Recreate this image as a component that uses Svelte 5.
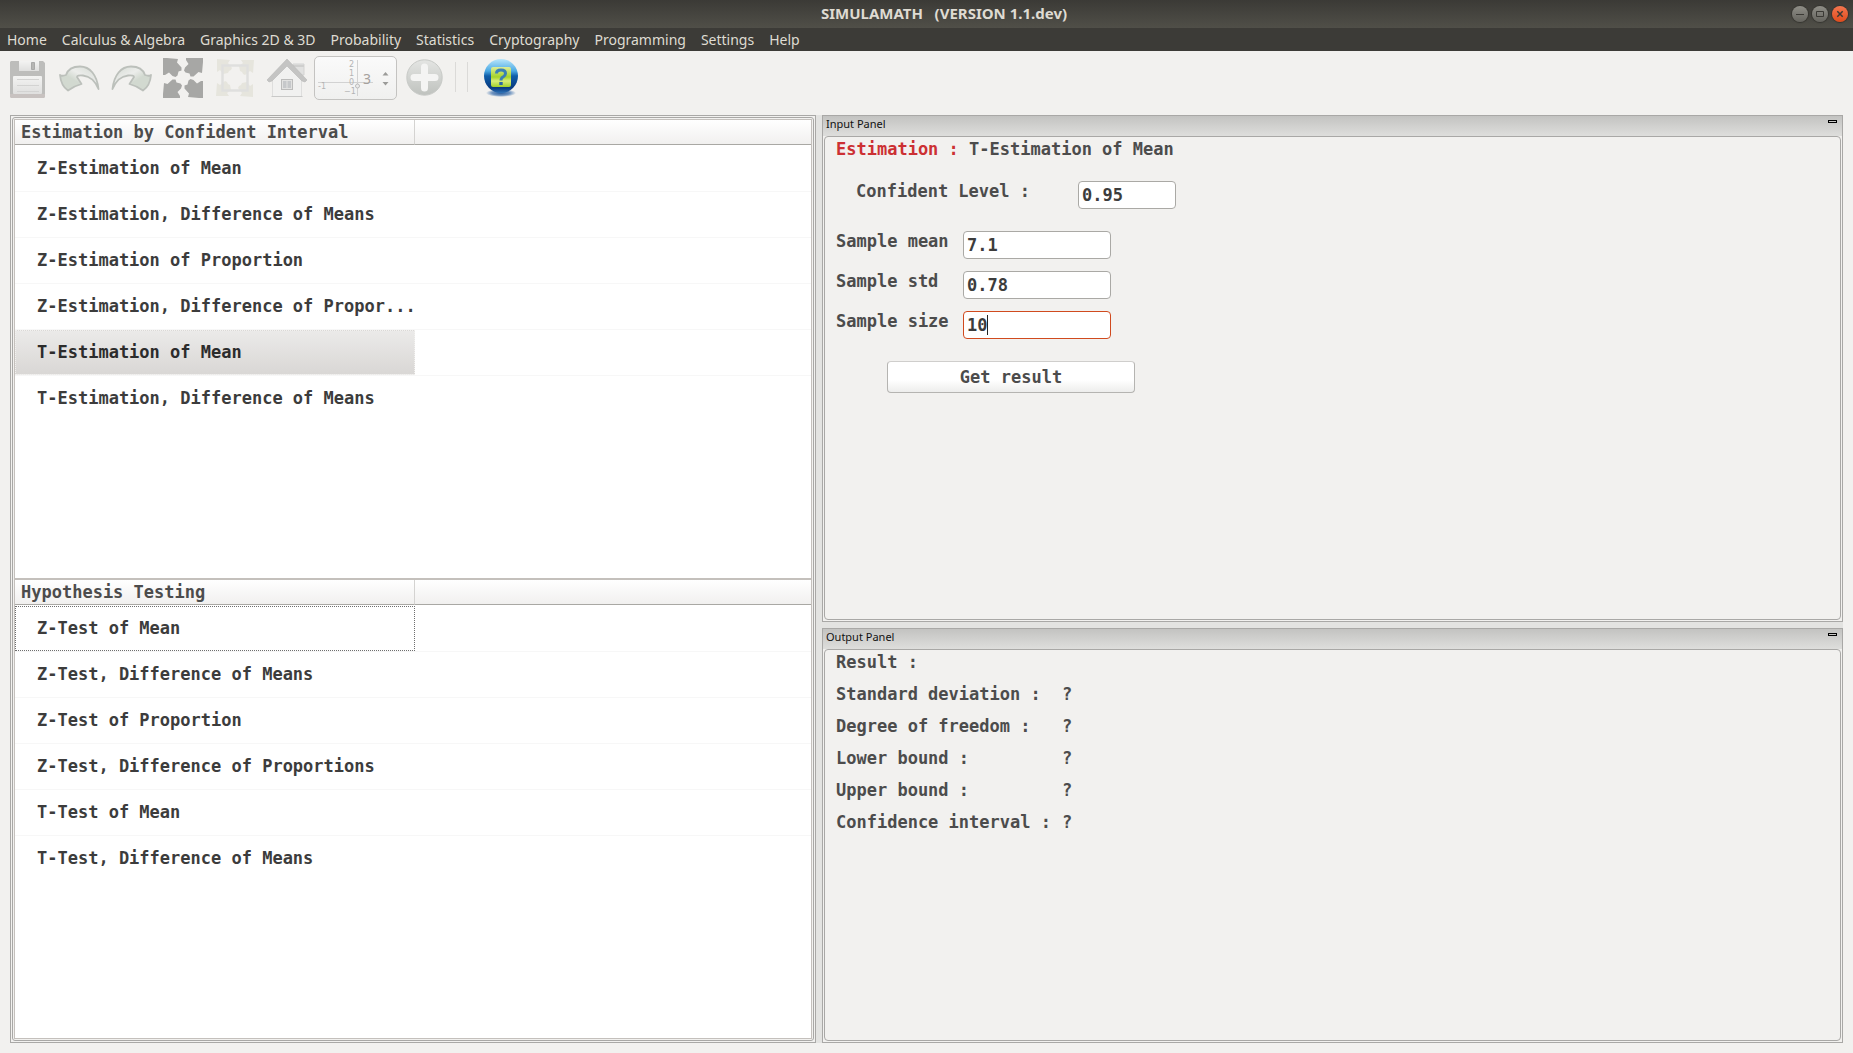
<script>
	const menus = [
		'Home',
		'Calculus & Algebra',
		'Graphics 2D & 3D',
		'Probability',
		'Statistics',
		'Cryptography',
		'Programming',
		'Settings',
		'Help'
	];

	const trees = [
		{
			title: 'Estimation by Confident Interval',
			rows: [
				'Z-Estimation of Mean',
				'Z-Estimation, Difference of Means',
				'Z-Estimation of Proportion',
				'Z-Estimation, Difference of Propor...',
				'T-Estimation of Mean',
				'T-Estimation, Difference of Means'
			]
		},
		{
			title: 'Hypothesis Testing',
			rows: [
				'Z-Test of Mean',
				'Z-Test, Difference of Means',
				'Z-Test of Proportion',
				'Z-Test, Difference of Proportions',
				'T-Test of Mean',
				'T-Test, Difference of Means'
			]
		}
	];

	let selected = $state('T-Estimation of Mean');
	let current = $state('Z-Test of Mean');

	let level = $state('0.95');
	let fields = $state([
		{ id: 'mean', label: 'Sample mean', value: '7.1' },
		{ id: 'std', label: 'Sample std', value: '0.78' },
		{ id: 'size', label: 'Sample size', value: '10' }
	]);
	let active = $state('size');

	const results = [
		'Standard deviation :',
		'Degree of freedom :',
		'Lower bound :',
		'Upper bound :',
		'Confidence interval :'
	];

	function pick(row) {
		selected = row;
		current = row;
	}
</script>

<div class="window">
	<header class="titlebar">
		<h1>SIMULAMATH &nbsp; (VERSION 1.1.dev)</h1>
		<div class="controls">
			<button aria-label="Minimize">
				<svg viewBox="0 0 16 16"><path d="M4 8.5h8" /></svg>
			</button>
			<button aria-label="Maximize">
				<svg viewBox="0 0 16 16"><path d="M4.5 5.5h7v5h-7z" /></svg>
			</button>
			<button class="close" aria-label="Close">
				<svg viewBox="0 0 16 16"><path d="M5.3 5.3l5.4 5.4M10.7 5.3l-5.4 5.4" /></svg>
			</button>
		</div>
	</header>

	<nav class="menubar">
		{#each menus as menu}
			<button>{menu}</button>
		{/each}
	</nav>

	<div class="toolbar">
		<div class="tools">
			<button aria-label="Save">
				<svg viewBox="0 0 40 40">
					<defs>
						<linearGradient id="paper" x1="0" y1="0" x2="0" y2="1">
							<stop offset="0" stop-color="#f3f3f2" />
							<stop offset="1" stop-color="#dfdfde" />
						</linearGradient>
					</defs>
					<path d="M4 3h32l2 2v33q0 2-2 2H5q-2 0-2-2V4z" fill="#bdbdbb" />
					<path d="M3 36h35v2q0 2-2 2H5q-2 0-2-2z" fill="#c8c2c0" />
					<path d="M12 3h20v10H12z" fill="url(#paper)" />
					<path d="M24.5 4.5h3v7h-3z" fill="#b6b6b4" stroke="#a9a9a8" />
					<rect x="6" y="18" width="29" height="18" rx="1" fill="url(#paper)" />
					<path d="M10 21.5h22M10 27.5h22M10 33.5h22" stroke="#d3d3d2" />
				</svg>
			</button>
			<button aria-label="Undo">
				<svg viewBox="0 0 40 40">
					<defs>
						<linearGradient id="arrow" x1="0" y1="1" x2="1" y2="0">
							<stop offset="0.4" stop-color="#d2d9d0" />
							<stop offset="0.6" stop-color="#ecedeb" />
							<stop offset="1" stop-color="#d2d8d0" />
						</linearGradient>
					</defs>
					<path
						d="M1 17Q3 18.5 7 17C9 11 14 8.5 21 8.5c10 0 17 8.5 18.5 22.5C36 23 32 18.5 24 17.5q-6-.5-6 1.500l4.500 7Q15 28 9 32.5 2 28 1 17z"
						fill="url(#arrow)"
						stroke="#bcc0bb"
						stroke-width="1.8"
						stroke-linejoin="round"
					/>
				</svg>
			</button>
			<button aria-label="Redo">
				<svg viewBox="0 0 40 40">
					<path
						transform="translate(41 0) scale(-1 1)"
						d="M1 17Q3 18.5 7 17C9 11 14 8.5 21 8.5c10 0 17 8.5 18.5 22.5C36 23 32 18.5 24 17.5q-6-.5-6 1.500l4.500 7Q15 28 9 32.5 2 28 1 17z"
						fill="url(#arrow)"
						stroke="#bcc0bb"
						stroke-width="1.8"
						stroke-linejoin="round"
					/>
				</svg>
			</button>
			<button aria-label="Expand">
				<svg viewBox="0 0 40 40" fill="#a7a7a5">
					{#each [0, 90, 180, 270] as angle}
						<path
							transform="rotate({angle} 20 20)"
							d="M0 0h4l11 1-1 3.5 4.5 5v3l-3 1-1 4-2 1.5-3-1L6 14.500 2 17H0z"
						/>
					{/each}
				</svg>
			</button>
			<button aria-label="Fit to window">
				<svg viewBox="0 0 40 40" fill="#e6e5dd">
					{#each [0, 90, 180, 270] as angle}
						<path
							transform="rotate({angle} 20 20)"
							d="M2 1l13 1-2 3 4 5-1 2-2 1-1 2-5 1-3-4-3 2z"
						/>
					{/each}
					<rect x="7.5" y="7.5" width="25" height="25" fill="none" stroke="#dfdfde" stroke-width="2.5" />
				</svg>
			</button>
			<button aria-label="Home view">
				<svg viewBox="0 0 40 40">
					<path d="M26 6h11v11h-3L26 12z" fill="#e1e1e0" stroke="#d3d3d2" />
					<path d="M26 7h11v2H26z" fill="#cfcfce" />
					<path d="M5.5 20L20 6.5 34.5 20v18.5h-29z" fill="#f1f1f0" stroke="#dededd" />
					<path d="M4.5 38.5h31" stroke="#c9c9c8" />
					<path d="M0 22L20 1l20 21-2 2-3-1L20 8 5 23l-3 1z" fill="#c4c4c3" stroke="#b8b8b7" stroke-width="0.6" />
					<rect x="14.5" y="21.5" width="11" height="10" fill="#e2e2e1" stroke="#bcbcbb" />
					<path d="M16 23h3.500v7H16zM20.500 23H24v7h-3.500z" fill="#c6c8ca" />
				</svg>
			</button>
		</div>

		<div class="spin">
			<svg viewBox="0 0 83 44" aria-hidden="true">
				<path d="M43.5 4v36M4 26.5h55" stroke="#d2d2d2" fill="none" />
				<g>
					<text x="35" y="11">2</text>
					<text x="35" y="20">1</text>
					<text x="35" y="29">0</text>
					<text x="30" y="38">−1</text>
					<text x="4" y="33">-1</text>
				</g>
				<circle cx="43.5" cy="30" r="2" fill="#ececec" stroke="#bbb" />
				<path d="M68.5 19.5l3-3.5 3 3.5zM68.5 26l3 3.5 3-3.5z" fill="#9b9b99" />
			</svg>
			<input type="text" value="3" aria-label="Decimals" />
		</div>

		<button class="add" aria-label="Add">
			<svg viewBox="0 0 40 40">
				<defs>
					<linearGradient id="disc" x1="0" y1="0" x2="0" y2="1">
						<stop offset="0" stop-color="#e4e5e3" />
						<stop offset="1" stop-color="#bfc2be" />
					</linearGradient>
				</defs>
				<circle cx="20.5" cy="19.5" r="17.7" fill="url(#disc)" stroke="#c8cac7" />
				<path d="M20.5 9v21M10 19.5h21" stroke="#f4f4f3" stroke-width="7" stroke-linecap="round" />
			</svg>
		</button>

		<div class="separators"></div>

		<button class="help" aria-label="Help contents">
			<svg viewBox="0 0 40 40">
				<defs>
					<linearGradient id="globe" x1="0" y1="0" x2="0" y2="1">
						<stop offset="0" stop-color="#b9e6fb" />
						<stop offset="0.35" stop-color="#4ba9e4" />
						<stop offset="0.5" stop-color="#105ea9" />
						<stop offset="0.85" stop-color="#083a80" />
						<stop offset="1" stop-color="#2f74b8" />
					</linearGradient>
					<linearGradient id="page" x1="0" y1="0" x2="0" y2="1">
						<stop offset="0" stop-color="#ddec9a" />
						<stop offset="0.5" stop-color="#a5d329" />
						<stop offset="0.7" stop-color="#d9ee7a" />
						<stop offset="1" stop-color="#a2d02a" />
					</linearGradient>
					<radialGradient id="shade">
						<stop offset="0" stop-color="#2d5f9e" />
						<stop offset="0.6" stop-color="#6f94c0" />
						<stop offset="1" stop-color="#f1f0ee" />
					</radialGradient>
				</defs>
				<ellipse cx="20" cy="35" rx="15" ry="4" fill="url(#shade)" />
				<circle cx="20" cy="18" r="17" fill="url(#globe)" />
				<rect x="10" y="9" width="20" height="20" rx="2" fill="url(#page)" />
				<path d="M15.5 15.5q0-3.5 4.5-3.5t4.5 3.5q0 2-2.5 3.5-2 1-2 3.5" fill="none" stroke="#3b7fb4" stroke-width="3" />
				<path d="M18.3 24h3.4v3h-3.4z" fill="#2b68a5" />
			</svg>
		</button>
	</div>

	<main>
		<section class="trees">
			<div class="trees-inner">
				{#each trees as tree}
					<div class="tree">
						<table>
							<thead>
								<tr>
									<th class="name" scope="col">{tree.title}</th>
									<td></td>
								</tr>
							</thead>
							<tbody>
								{#each tree.rows as row}
									<tr>
										<td class="name">
											<button
												class:selected={selected === row}
												class:current={current === row}
												onclick={() => pick(row)}>{row}</button
											>
										</td>
										<td></td>
									</tr>
								{/each}
							</tbody>
						</table>
					</div>
				{/each}
			</div>
		</section>

		<div class="docks">
			<section class="dock">
				<header>
					<h2>Input Panel</h2>
					<button aria-label="Collapse input panel"></button>
				</header>
				<form class="body" onsubmit={(e) => e.preventDefault()}>
					<p><span class="kind">Estimation :</span> T-Estimation of Mean</p>
					<div class="field level">
						<label for="level">Confident Level :</label>
						<input id="level" type="text" bind:value={level} />
					</div>
					<div class="samples">
						{#each fields as field}
							<div class="field">
								<label for={field.id}>{field.label}</label>
								<input
									id={field.id}
									type="text"
									class:active={active === field.id}
									bind:value={field.value}
									onfocus={() => (active = field.id)}
								/>
							</div>
						{/each}
					</div>
					<button class="submit" type="submit">Get result</button>
				</form>
			</section>

			<section class="dock">
				<header>
					<h2>Output Panel</h2>
					<button aria-label="Collapse output panel"></button>
				</header>
				<div class="body">
					<p>Result :</p>
					<dl>
						{#each results as result}
							<dt>{result}</dt>
							<dd>?</dd>
						{/each}
					</dl>
				</div>
			</section>
		</div>
	</main>
</div>

<style>
	:global(body) {
		margin: 0;
	}

	.window {
		display: flex;
		flex-direction: column;
		min-height: 100vh;
		background: #f2f1ef;
		color: #4c4c4c;
		font-family: 'Noto Sans', sans-serif;
	}

	.window :global(*) {
		box-sizing: border-box;
	}

	button {
		padding: 0;
		border: none;
		background: none;
		color: inherit;
		font: inherit;
	}

	svg {
		display: block;
		overflow: visible;
	}

	/* Title bar and menu */
	.titlebar {
		display: grid;
		grid-template-columns: 96px 1fr 56px;
		align-items: center;
		height: 28px;
		padding-right: 5px;
		background: linear-gradient(#3b3a36, #504f48);
	}

	.titlebar h1 {
		grid-column: 2;
		margin: 0;
		padding-bottom: 2px;
		color: #dfdbd2;
		font-size: 15px;
		line-height: 20px;
		text-align: center;
	}

	.controls {
		display: flex;
		gap: 4px;
	}

	.controls button {
		width: 16px;
		height: 16px;
		border-radius: 50%;
		background: linear-gradient(#8f8e87, #65645e);
		box-shadow: 0 0 1px 1px #35342f;
	}

	.controls .close {
		background: linear-gradient(#f4764f, #df4b1c);
	}

	.controls path {
		fill: none;
		stroke: #3a3934;
	}

	.controls .close path {
		stroke-width: 1.5;
	}

	.menubar {
		display: flex;
		gap: 15px;
		height: 23px;
		padding-left: 7px;
		background: #3c3b37;
		color: #dfdbd2;
		font-size: 14px;
		line-height: 23px;
	}

	/* Toolbar */
	.toolbar {
		display: flex;
		align-items: flex-start;
		gap: 7px;
		height: 64px;
		padding: 5px 7px;
	}

	.tools {
		display: flex;
		gap: 12px;
		padding-top: 2px;
	}

	.toolbar button svg {
		width: 40px;
		height: 40px;
	}

	.toolbar .add,
	.toolbar .help {
		height: 40px;
		margin-top: 2px;
	}

	.spin {
		position: relative;
		width: 83px;
		height: 44px;
		border: 1px solid #c4c3c1;
		border-radius: 5px;
		background: linear-gradient(#fafafa, #f0f0ef);
	}

	.spin svg {
		width: 83px;
		height: 44px;
		margin: -1px;
	}

	.spin text {
		fill: #b4b4b4;
		font-family: 'DejaVu Sans', sans-serif;
		font-size: 8px;
	}

	.spin input {
		position: absolute;
		inset: 0;
		width: 60px;
		padding: 0 0 0 48px;
		border: none;
		background: none;
		color: #a6a19d;
		font-family: 'Noto Sans', sans-serif;
		font-size: 14px;
	}

	.separators {
		width: 13px;
		height: 30px;
		margin: 6px 6px 0 4px;
		border: solid #dbdad8;
		border-width: 0 1px;
	}

	/* Main area */
	main {
		flex: 1;
		display: grid;
		grid-template-columns: 806fr 1021fr;
		gap: 6px;
		margin: 0 10px 10px;
		background: #e3e3e1;
		font-family: 'DejaVu Sans Mono', monospace;
		font-size: 17px;
		font-weight: bold;
		line-height: 20px;
	}

	.trees {
		display: flex;
		padding: 1px;
		border: 1px solid #a9a8a6;
		background: #f2f1ef;
	}

	.trees-inner {
		flex: 1;
		display: flex;
		flex-direction: column;
		padding: 1px;
		border: 1px solid #a9a8a6;
		border-radius: 3px;
	}

	.tree {
		flex: 1;
		border: 1px solid #c4c0bc;
		background: #fff;
	}

	table {
		width: 100%;
		border-collapse: separate;
		border-spacing: 0;
		table-layout: fixed;
	}

	th,
	td {
		padding: 0;
		text-align: left;
		white-space: nowrap;
	}

	.name {
		width: 400px;
	}

	thead th,
	thead td {
		height: 25px;
		border-bottom: 1px solid #a9a8a4;
		background: linear-gradient(#fff, #f1f0ef);
	}

	thead th {
		padding-left: 6px;
		border-right: 1px solid #d4d3d1;
	}

	tbody td {
		height: 46px;
		border-top: 1px solid #f7f7f7;
		color: #3c3c3c;
	}

	tbody tr:first-child td {
		border-top-color: #fff;
	}

	tbody button {
		display: block;
		width: 100%;
		height: 45px;
		padding: 0 0 2px 21px;
		border: 1px solid transparent;
		text-align: left;
	}

	tbody .current {
		border: 1px dotted #6e6e6e;
	}

	tbody .selected {
		border: 1px dotted #f2f1ef;
		background: linear-gradient(#ebeae9, #d9d7d5);
		color: #2c2c2c;
	}

	/* Dock panels */
	.docks {
		display: grid;
		grid-template-rows: 507fr 415fr;
		gap: 6px;
	}

	.dock {
		display: flex;
		flex-direction: column;
		padding: 0 1px 1px;
		border: 1px solid #a9a8a6;
		background: #f2f1ef;
	}

	.dock header {
		display: flex;
		justify-content: space-between;
		height: 20px;
		margin: 0 -1px;
		padding: 0 5px 0 3px;
		background: linear-gradient(#c3c3c1, #dededc);
	}

	.dock h2 {
		margin: 0;
		color: #111;
		font-family: 'Noto Sans', sans-serif;
		font-size: 11px;
		font-weight: normal;
		line-height: 15px;
	}

	.dock header button {
		width: 9px;
		height: 3px;
		margin-top: 4px;
		border: 1px solid #000;
		background: #c8c8c6;
	}

	.body {
		flex: 1;
		padding: 2px 11px;
		border: 1px solid #a9a8a6;
		border-radius: 4px;
	}

	.body p {
		margin: 0;
	}

	.kind {
		color: #cc3033;
	}

	.field {
		display: flex;
		align-items: flex-start;
	}

	.field label {
		width: 127px;
	}

	.field input {
		width: 148px;
		height: 28px;
		padding: 0 3px;
		border: 1px solid #aaa9a5;
		border-radius: 4px;
		outline: none;
		background: #fff;
		color: #3c3c3c;
		font: inherit;
	}

	/* Caret after the typed digits */
	.field .active {
		border-color: #d04a1e;
		background: linear-gradient(#222, #222) 23px 3px / 1px 20px no-repeat #fff;
	}

	.level {
		margin: 22px 0 22px 20px;
	}

	.level label {
		width: 222px;
	}

	.level input {
		width: 98px;
	}

	.samples {
		display: grid;
		gap: 12px;
	}

	.submit {
		width: 248px;
		height: 32px;
		margin: 22px 0 0 51px;
		border: 1px solid #b5b4b1;
		border-top-color: #cfcecc;
		border-radius: 4px;
		background: linear-gradient(#fff 60%, #ededec);
	}

	dl {
		display: grid;
		grid-template-columns: 226px 1fr;
		row-gap: 12px;
		margin: 12px 0 0;
	}

	dd {
		margin: 0;
	}
</style>
